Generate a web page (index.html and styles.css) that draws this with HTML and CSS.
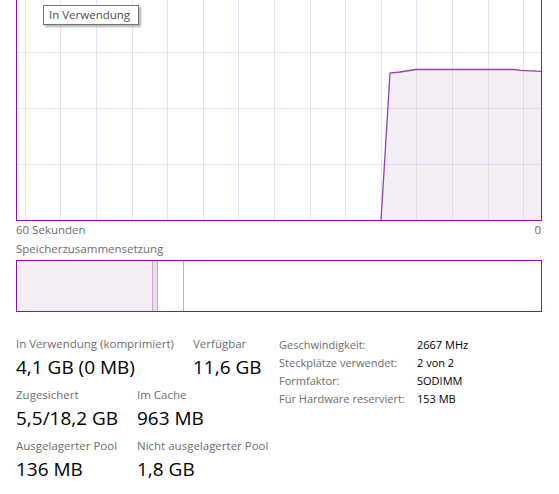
FILE: index.html
```html
<!DOCTYPE html>
<html lang="de">
<head>
<meta charset="utf-8">
<title>Arbeitsspeicher</title>
<link rel="stylesheet" href="styles.css">
</head>
<body>
<div class="page">
  <div class="chart">
    <svg class="chart-svg" width="526" height="221" viewBox="0 0 526 221">
      <polygon points="365,220.5 374,73 384,72 400,69.5 498,69.5 504,70.3 525,71.3 525,220.5" fill="#f3eff4"/>
      <g stroke="#d9b8e3" stroke-opacity="0.45" stroke-width="1">
        <line x1="9.5" y1="0" x2="9.5" y2="220"/>
        <line x1="44.5" y1="0" x2="44.5" y2="220"/>
        <line x1="80.5" y1="0" x2="80.5" y2="220"/>
        <line x1="116.5" y1="0" x2="116.5" y2="220"/>
        <line x1="151.5" y1="0" x2="151.5" y2="220"/>
        <line x1="187.5" y1="0" x2="187.5" y2="220"/>
        <line x1="222.5" y1="0" x2="222.5" y2="220"/>
        <line x1="258.5" y1="0" x2="258.5" y2="220"/>
        <line x1="294.5" y1="0" x2="294.5" y2="220"/>
        <line x1="329.5" y1="0" x2="329.5" y2="220"/>
        <line x1="365.5" y1="0" x2="365.5" y2="220"/>
        <line x1="400.5" y1="0" x2="400.5" y2="220"/>
        <line x1="436.5" y1="0" x2="436.5" y2="220"/>
        <line x1="472.5" y1="0" x2="472.5" y2="220"/>
        <line x1="507.5" y1="0" x2="507.5" y2="220"/>
        <line x1="0" y1="52.5" x2="524" y2="52.5"/>
        <line x1="0" y1="108.5" x2="524" y2="108.5"/>
        <line x1="0" y1="164.5" x2="524" y2="164.5"/>
      </g>
      <polyline points="365,220.5 374,73 384,72 400,69.5 498,69.5 504,70.3 525,71.3" fill="none" stroke="#9a3fb8" stroke-width="1.3"/>
      <line x1="0.5" y1="0" x2="0.5" y2="221" stroke="#8b12ae" stroke-width="1"/>
      <line x1="525.5" y1="0" x2="525.5" y2="221" stroke="#8b12ae" stroke-width="1"/>
      <line x1="0" y1="220.5" x2="526" y2="220.5" stroke="#8b12ae" stroke-width="1"/>
    </svg>
    <div class="tooltip">In Verwendung</div>
  </div>
  <div class="axis">
    <span>60 Sekunden</span>
    <span>0</span>
  </div>
  <div class="section-title">Speicherzusammensetzung</div>
  <div class="comp">
    <div class="seg seg-used"></div>
    <div class="seg seg-mod"></div>
    <div class="seg seg-standby"></div>
    <div class="seg seg-free"></div>
  </div>
  <div class="stats">
    <div class="stats-left">
      <div class="row">
        <div class="stat w177">
          <div class="label">In Verwendung (komprimiert)</div>
          <div class="value">4,1 GB (0 MB)</div>
        </div>
        <div class="stat">
          <div class="label">Verfügbar</div>
          <div class="value">11,6 GB</div>
        </div>
      </div>
      <div class="row">
        <div class="stat w121">
          <div class="label">Zugesichert</div>
          <div class="value">5,5/18,2 GB</div>
        </div>
        <div class="stat">
          <div class="label">Im Cache</div>
          <div class="value">963 MB</div>
        </div>
      </div>
      <div class="row">
        <div class="stat w121">
          <div class="label">Ausgelagerter Pool</div>
          <div class="value">136 MB</div>
        </div>
        <div class="stat">
          <div class="label">Nicht ausgelagerter Pool</div>
          <div class="value">1,8 GB</div>
        </div>
      </div>
    </div>
    <div class="props">
      <div class="prop"><span class="pk">Geschwindigkeit:</span><span class="pv">2667 MHz</span></div>
      <div class="prop"><span class="pk">Steckplätze verwendet:</span><span class="pv">2 von 2</span></div>
      <div class="prop"><span class="pk">Formfaktor:</span><span class="pv">SODIMM</span></div>
      <div class="prop"><span class="pk">Für Hardware reserviert:</span><span class="pv">153 MB</span></div>
    </div>
  </div>
</div>
</body>
</html>
```

FILE: styles.css
```css
html, body {
  margin: 0;
  padding: 0;
  background: #ffffff;
}
body {
  font-family: "Open Sans", "Noto Sans", "Liberation Sans", sans-serif;
  color: #000;
  overflow: hidden;
}
.page {
  width: 526px;
  padding-left: 16px;
}
.chart {
  position: relative;
  width: 526px;
  height: 221px;
}
.chart-svg {
  display: block;
}
.tooltip {
  position: absolute;
  left: 27px;
  top: 5px;
  width: 89px;
  height: 18px;
  border: 1px solid #767676;
  background: #ffffff;
  box-shadow: 2px 2px 2px rgba(0, 0, 0, 0.3);
  font-size: 11.5px;
  line-height: 17px;
  color: #4c4c4c;
  padding-left: 5px;
  box-sizing: content-box;
  white-space: nowrap;
}
.axis {
  display: flex;
  justify-content: space-between;
  font-size: 11.5px;
  line-height: 17px;
  color: #6d6d6d;
  height: 17px;
  padding-right: 1px;
}
.section-title {
  font-size: 11.5px;
  line-height: 17px;
  color: #6d6d6d;
  height: 17px;
  margin-top: 2px;
  margin-bottom: 3px;
}
.comp {
  display: flex;
  height: 50px;
  border: 1px solid #8b12ae;
}
.seg {
  height: 100%;
}
.seg-used {
  width: 135px;
  background: #f3eff4;
  border-right: 1px solid #cca6d6;
}
.seg-mod {
  width: 4px;
  background: #ecdcef;
  border-right: 1px solid #cca6d6;
}
.seg-standby {
  width: 25px;
  background: #ffffff;
  border-right: 1px solid #cca6d6;
}
.seg-free {
  flex: 1;
  background: #ffffff;
}
.stats {
  display: flex;
  margin-top: 24px;
}
.stats-left {
  width: 263px;
  display: flex;
  flex-direction: column;
  gap: 5px;
}
.row {
  display: flex;
}
.stat {
  display: flex;
  flex-direction: column;
}
.w177 { width: 177px; }
.w121 { width: 121px; }
.label {
  font-size: 11.5px;
  line-height: 16px;
  color: #6d6d6d;
  white-space: nowrap;
}
.value {
  font-size: 19px;
  line-height: 30px;
  color: #000;
  white-space: nowrap;
}
.props {
  display: flex;
  flex-direction: column;
}
.prop {
  display: flex;
  font-size: 11px;
  line-height: 18px;
  white-space: nowrap;
}
.pk {
  width: 138px;
  color: #6d6d6d;
}
.pv {
  color: #000;
}
```
